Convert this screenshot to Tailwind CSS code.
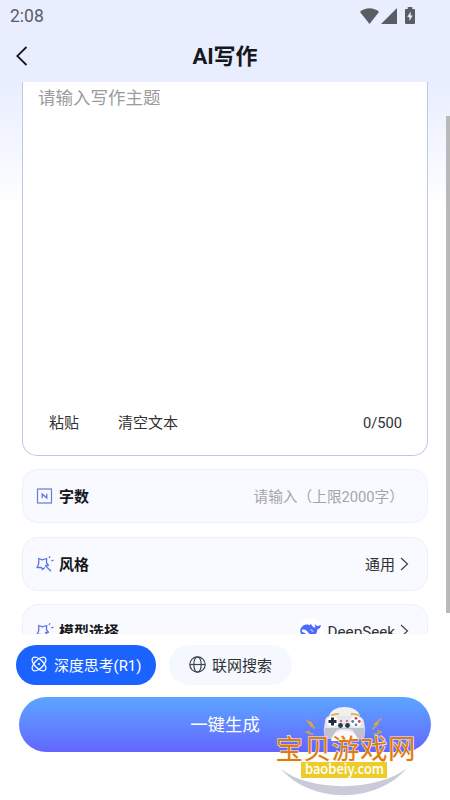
<!DOCTYPE html>
<html lang="zh">
<head>
<meta charset="utf-8">
<title>AI写作</title>
<script src="https://cdn.jsdelivr.net/npm/@tailwindcss/browser@4"></script>
</head>
<body class="bg-white">
<div class="relative flex h-[800px] w-[450px] flex-col overflow-hidden bg-white font-['Roboto','Noto_Sans_CJK_SC',sans-serif] text-[15px] text-[#303133]">
  <header class="h-[82px] shrink-0 bg-[#e9eeff]">
    <div class="flex h-[32px] items-center justify-between pr-[35px] pl-[10px] text-[#5b5d65]">
      <span class="text-[17.500px]">2:08</span>
      <div class="flex h-[17px] items-end pb-px">
        <svg class="h-[16px] w-[19px]" viewBox="0 0 19 16" fill="currentColor"><path d="M0 4C5-1 14-1 19 4L9.500 16Z"/></svg>
        <svg class="ml-[2px] h-[16px] w-[16px]" viewBox="0 0 16 16" fill="currentColor"><path d="M16 0V16H0Z"/></svg>
        <svg class="ml-[8px] h-[17px] w-[10px]" viewBox="0 0 11 17" preserveAspectRatio="none"><path fill="currentColor" d="M3 0h5v2h2q1 0 1 1v13q0 1-1 1H1q-1 0-1-1V3q0-1 1-1h2Z"/><path fill="#e9eeff" d="M6.200 4.500 2.500 10h2.300v4L8.500 8.500H6.200Z"/></svg>
      </div>
    </div>
    <div class="grid h-[50px] grid-cols-3 items-center px-[16px] pb-[2px]">
      <svg class="h-[20px] w-[12px]" viewBox="0 0 12 20" fill="none" stroke="#17181c" stroke-width="1.800"><path d="M10.500 1 1.200 10l9.300 9"/></svg>
      <h1 class="pt-[2px] text-center text-[22px] leading-none font-bold whitespace-nowrap text-[#17181c]">AI写作</h1>
    </div>
  </header>

  <main class="relative h-[552px] shrink-0 overflow-hidden bg-linear-to-b from-[#e9eeff] from-0% to-white to-[23%] px-[22px]">
    <section class="flex h-[374px] flex-col justify-between rounded-b-[15px] border border-t-0 border-[#bdc7ec] bg-white pt-[4px] pr-[25px] pb-[20px] pl-[15px]">
      <p class="text-[17.500px] leading-[25px] text-[#9b9b9b]">请输入写作主题</p>
      <div class="flex items-center pl-[11px] leading-[24px]">
        <span>粘贴</span><span class="ml-[39px]">清空文本</span><span class="ml-auto text-[14.700px]">0/500</span>
      </div>
    </section>
    <section class="mt-[13px] flex h-[54px] items-center rounded-[16px] border border-[#eaf0fd] bg-[#f9faff] pr-[23px] pl-[13px]">
      <svg class="h-[16px] w-[17px]" viewBox="0 0 17 16" fill="none" stroke="#6079e4"><rect x="1.500" y="1" width="14" height="14" stroke-width="1.200"/><path d="M6.200 10.200V6l4.600 4V5.800" stroke-width="1.300"/></svg>
      <b class="ml-[6px] pt-[2px] text-[#17181c]">字数</b>
      <span class="ml-auto pt-[2px] text-[14.700px] text-[#a3a5aa]">请输入（上限2000字）</span>
    </section>
    <section class="mt-[14px] flex h-[54px] items-center rounded-[16px] border border-[#eaf0fd] bg-[#f9faff] pr-[18px] pl-[13px]">
      <svg class="h-[18px] w-[18px]" viewBox="0 0 18 18" fill="none" stroke="#5b75e2" stroke-width="1.300" stroke-linejoin="round"><path d="M8.700 12.500 6.700 14.500 5.200 12.500 1 12.500 2.700 8.700 2.800 3.500 6.300 4.800 10.700 3.500 10.400 7.500 12.500 10.300 9.200 10.500M9.200 10.500 15 16.200M13 3l1-1.800M15.200 6l2.300-.8"/></svg>
      <b class="ml-[5px] pt-[2px] text-[#17181c]">风格</b>
      <span class="ml-auto pt-[2px]">通用</span>
      <svg class="ml-[5px] h-[14px] w-[9px]" viewBox="0 0 9 14" fill="none" stroke="#404144" stroke-width="1.200"><path d="m1 1 6.500 6L1 13"/></svg>
    </section>
    <section class="mt-[13px] flex h-[54px] items-center rounded-[16px] border border-[#eaf0fd] bg-[#f9faff] pr-[18px] pl-[13px]">
      <svg class="h-[18px] w-[18px]" viewBox="0 0 18 18" fill="none" stroke="#5b75e2" stroke-width="1.300" stroke-linejoin="round"><path d="M8.700 12.500 6.700 14.500 5.200 12.500 1 12.500 2.700 8.700 2.800 3.500 6.300 4.800 10.700 3.500 10.400 7.500 12.500 10.300 9.200 10.500M9.200 10.500 15 16.200M13 3l1-1.800M15.200 6l2.300-.8"/></svg>
      <b class="ml-[5px] pt-[2px] text-[#17181c]">模型选择</b>
      <span class="ml-auto flex h-[26px] w-[26px] items-center justify-center rounded-full bg-white">
        <svg class="h-[16px] w-[22px] shrink-0" viewBox="0 0 22 16"><path fill="#4d6bfe" d="M.2 8C.5 4 3.500 1.500 7 1.500 8.500 1.500 9 2 9.500 2.200L11.200.8C11 2 12.500 3 13.700 4.500 14.700 4.600 15.300 4.200 15.500 3.700 14.800 3 14.700 2 15 1 15.800 2.500 16.800 3 18 3 19 2.300 20 2 21 2.300 20.700 4.500 19.500 5.800 17.500 6.200 17.300 9 16 11.500 14 13L15 14.500H12.500C7 17 1 15 .2 8Z"/><path fill="white" d="M2 6.800C5 6 7.500 8 9 10.500 10 12 11 12.500 10 13 6.500 13 6 9.500 2 9Z"/><path d="M10.500 6.800q2 0 2.500 2" fill="none" stroke="white" stroke-width=".9"/></svg>
      </span>
      <span class="ml-[4px] pt-[2px] text-[15.200px]">DeepSeek</span>
      <svg class="ml-[5px] h-[14px] w-[9px]" viewBox="0 0 9 14" fill="none" stroke="#404144" stroke-width="1.200"><path d="m1 1 6.500 6L1 13"/></svg>
    </section>
    <div class="absolute top-[34px] right-0 h-[497px] w-[4px] bg-[#b9b9b9]"></div>
  </main>

  <footer class="grow bg-white pt-[11px]">
    <div class="flex gap-[13px] pl-[16px]">
      <button class="flex h-[40px] w-[140px] items-center rounded-full bg-[#1b63ff] pl-[15px] text-white">
        <svg class="mr-[7px] mb-[2px] h-[16px] w-[16px]" viewBox="0 0 16 16" fill="none" stroke="currentColor" stroke-width="1.200"><ellipse cx="8" cy="8" rx="8.700" ry="4.300" transform="rotate(45 8 8)"/><ellipse cx="8" cy="8" rx="8.700" ry="4.300" transform="rotate(-45 8 8)"/><circle cx="8" cy="8" r="1.100" fill="currentColor" stroke="none"/></svg>
        <span class="pt-[2px] text-[14.900px] whitespace-nowrap">深度思考(R1)</span>
      </button>
      <button class="flex h-[40px] w-[123px] items-center rounded-full bg-[#f5f8ff] pl-[20px]">
        <svg class="mr-[6px] mb-[2px] h-[17px] w-[17px]" viewBox="0 0 17 17" fill="none" stroke="#3f4450" stroke-width="1.200"><circle cx="8.500" cy="8.500" r="7.700"/><ellipse cx="8.500" cy="8.500" rx="3.700" ry="7.700"/><path d="M1 8.500h15"/></svg>
        <span class="pt-[2px]">联网搜索</span>
      </button>
    </div>
    <button class="mt-[12px] ml-[19px] flex h-[55px] w-[412px] items-center justify-center rounded-full bg-linear-to-b from-[#5ca5ff] to-[#6265ff] pt-[2px] text-[17.400px] text-white">一键生成</button>
  </footer>

  <div class="absolute top-[700px] left-[265px] h-[100px] w-[160px]">
    <svg class="h-full w-full" viewBox="0 0 160 100">
      <path d="M16 69C45 92 112 92 142 68C112 104 46 104 16 69Z" fill="#c9cbd8"/>
      <path d="M64 16C67 4 92 4 95 16Z" fill="#f0f0f3"/>
      <path d="M60 22C60 15 67 15 74 16H85C92 15 98 16 99 22C100 28 101 33 98 39H91C88 29 71 29 68 39H60C58 33 59 28 60 22Z" fill="#e6e6ec"/>
      <path d="M60 28C59 33 58 37 61 39H68C69 33 71 29 76 29H83C89 29 90 33 91 39H98C101 37 100 32 99 28L90 28H69Z" fill="#bfc1ce"/>
      <path d="M66 41C67 27 92 27 93 41Z" fill="#fafafd"/>
      <path d="M66 15.500q4-2 8-1.500M86 14q4-.5 8 1.500" fill="none" stroke="#e4b14d" stroke-width="1.800"/>
      <circle cx="67.500" cy="21.500" r="5.500" fill="#fff"/><circle cx="91" cy="21.500" r="5.500" fill="#fff"/>
      <path d="M67.500 17.500v8M63.500 21.500h8" stroke="#222d3d" stroke-width="3"/>
      <g fill="#cc425f"><circle cx="91" cy="18.300" r="1.400"/><circle cx="94.300" cy="21.500" r="1.400"/></g>
      <g fill="#3e8cae"><circle cx="87.700" cy="21.500" r="1.400"/><circle cx="91" cy="24.800" r="1.400"/></g>
      <path d="M75 21h2M81 21h2" stroke="#d9425c" stroke-width="1.500"/>
      <circle cx="75.500" cy="25.500" r="2.400" fill="#27374a"/><circle cx="82.500" cy="25.500" r="2.400" fill="#27374a"/>
      <g fill="none" stroke="#d9a348" stroke-width="1.600" stroke-linejoin="miter"><path d="M41.500 19.500 47 27 45 21.500 49.500 28.500M40.500 32.500 44 31.500 44 33.500 48.500 34"/><path d="M116.500 18.500 109 24.500 113.500 23 107.500 29M117 32.500 113.500 31 113.500 33.500 108.500 34"/></g>
      <text x="10.500" y="58.500" textLength="140" lengthAdjust="spacing" font-family="'Noto Sans CJK SC',sans-serif" font-size="27.500" fill="#df7a12" stroke="#fff3de" stroke-width="1.200" paint-order="stroke">宝贝游戏网</text>
      <rect x="36" y="62" width="86" height="16" fill="#ebcc29"/>
      <text x="40" y="74" textLength="79" lengthAdjust="spacingAndGlyphs" font-family="'Noto Sans CJK SC',sans-serif" font-size="14" font-weight="500" fill="white">baobeiy.com</text>
    </svg>
  </div>
</div>
</body>
</html>
